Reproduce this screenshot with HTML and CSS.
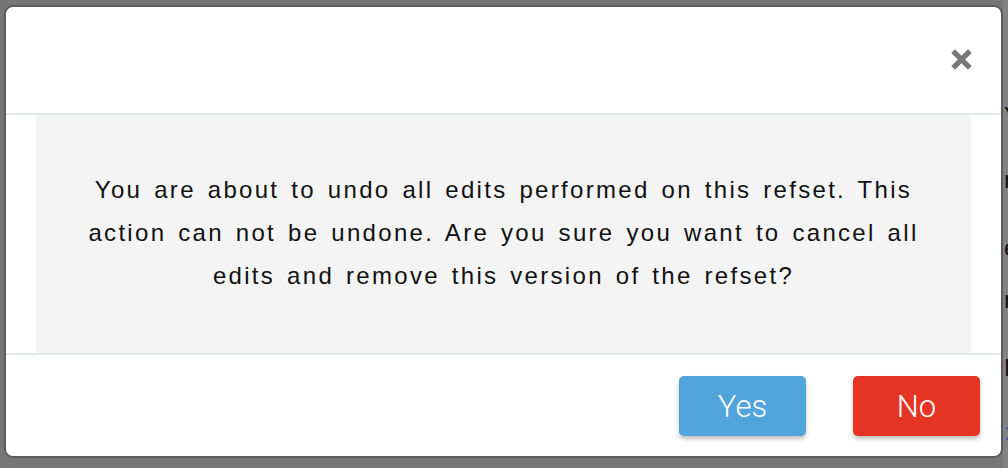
FILE: index.html
```html
<!DOCTYPE html>
<html>
<head>
<meta charset="utf-8">
<link rel="stylesheet" href="styles.css">
</head>
<body>
<div class="backdrop-strip">
  <span class="frag f1">Y</span>
  <span class="frag f2">r</span>
  <span class="frag f3">e</span>
  <span class="frag f4">r</span>
  <span class="frag f5">M</span>
  <span class="frag f6 link">:</span>
</div>
<div class="modal">
  <div class="modal-header">
    <button class="close" aria-label="Close">
      <svg width="22" height="22" viewBox="0 0 22 22"><path d="M3 3 L19 19 M19 3 L3 19" stroke="#777" stroke-width="5" stroke-linecap="butt"/></svg>
    </button>
  </div>
  <div class="modal-body">
    <div class="message">
      <p>You are about to undo all edits performed on this refset. This action can not be undone. Are you sure you want to cancel all edits and remove this version of the refset?</p>
    </div>
  </div>
  <div class="modal-footer">
    <button class="btn btn-yes">Yes</button>
    <button class="btn btn-no">No</button>
  </div>
</div>
</body>
</html>
```
FILE: styles.css
```css
html, body {
  margin: 0;
  padding: 0;
}
body {
  width: 1008px;
  height: 468px;
  background: #767676;
  position: relative;
  overflow: hidden;
  font-family: "Liberation Sans", Arial, sans-serif;
}
.backdrop-strip {
  position: absolute;
  left: 1003px;
  top: 0;
  width: 5px;
  height: 468px;
  background: #828282;
}
.frag {
  position: absolute;
  left: 1px;
  font-size: 24px;
  color: #111;
  line-height: 1;
}
.f1 { top: 104px; }
.f2 { top: 168px; }
.f3 { top: 236px; }
.f4 { top: 288px; }
.f5 { top: 356px; }
.f6 { top: 420px; color: #3a5fb0; }
.modal {
  position: absolute;
  left: 4px;
  top: 5px;
  width: 995px;
  height: 449px;
  border: 2px solid #5c5c5c;
  border-radius: 9px;
  background: #fff;
  display: flex;
  flex-direction: column;
  overflow: hidden;
}
.modal-header {
  height: 108px;
  flex: none;
  border-bottom: 2px solid #e3e6ea;
  display: flex;
  justify-content: flex-end;
  align-items: flex-start;
  padding-right: 28px;
  box-sizing: border-box;
}
.close {
  margin-top: 41px;
  border: 0;
  background: none;
  padding: 0;
  width: 23px;
  height: 23px;
  cursor: pointer;
}
.close svg { display: block; width: 23px; height: 23px; }
.modal-body {
  height: 240px;
  flex: none;
  padding: 0 30px;
  box-sizing: border-box;
  border-bottom: 2px solid #e3e6ea;
}
.message {
  background: #f4f4f4;
  height: 100%;
  display: flex;
  align-items: center;
  justify-content: center;
}
.message p {
  margin: 0;
  width: 880px;
  text-align: center;
  font-size: 24px;
  line-height: 43px;
  color: #111;
  letter-spacing: 2.3px;
  word-spacing: 3px;
  padding-bottom: 4px;
}
.modal-footer {
  flex: 1;
  display: flex;
  justify-content: flex-end;
  align-items: flex-start;
  padding: 21px 21px 0 0;
  gap: 47px;
}
.btn {
  width: 127px;
  height: 60px;
  border: 0;
  border-radius: 5px;
  color: #fff;
  font-family: Roboto, "Liberation Sans", sans-serif;
  font-weight: 300;
  font-size: 31px;
  box-shadow: 0 3px 4px rgba(0,0,0,0.25);
  cursor: pointer;
  padding: 0;
}
.btn-yes { background: #51a5dc; }
.btn-no { background: #e53324; }
```
